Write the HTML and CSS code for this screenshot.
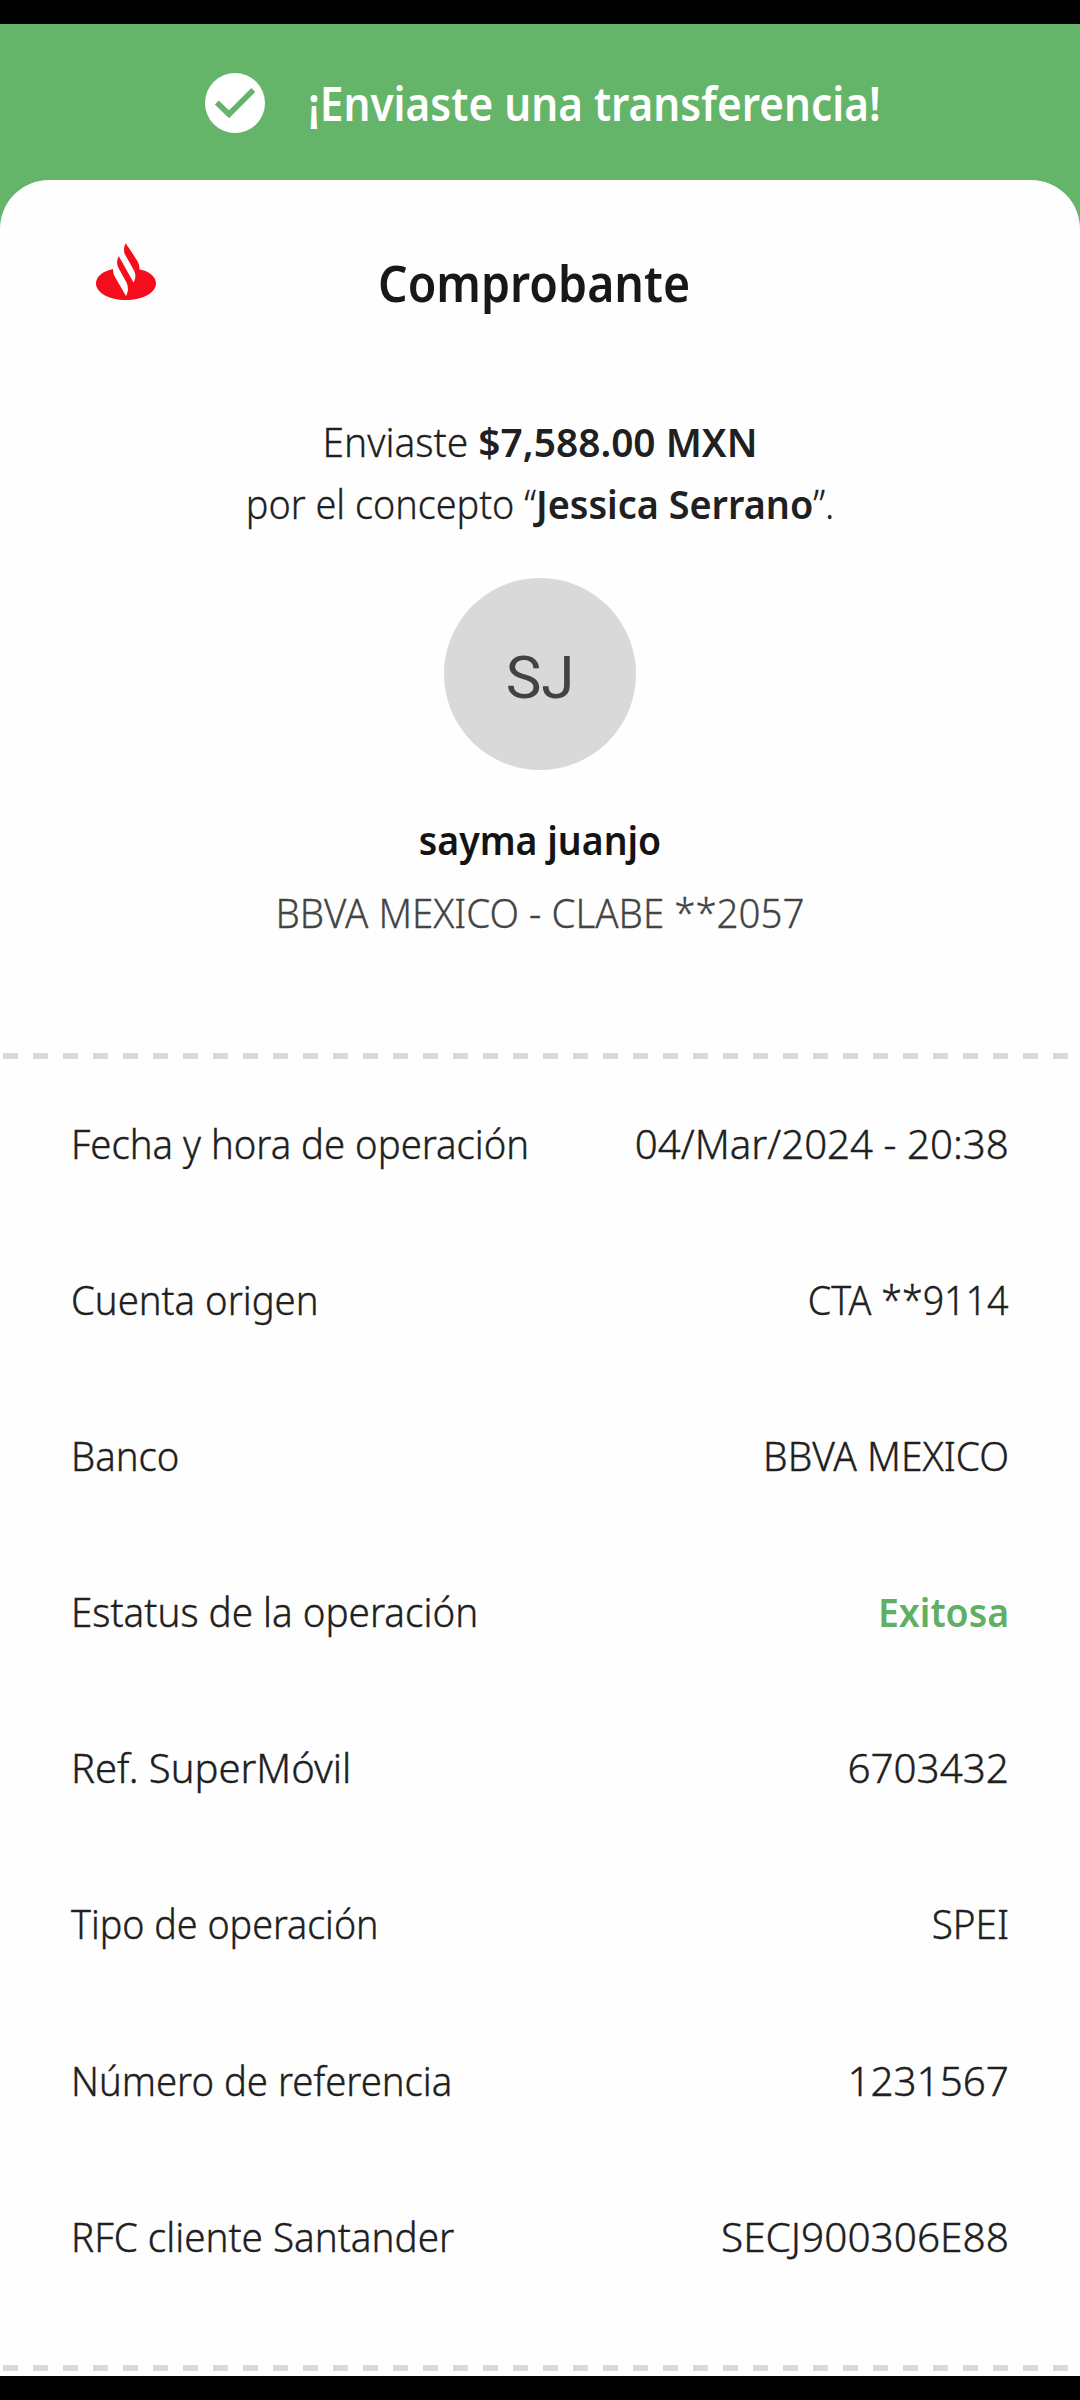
FILE: index.html
```html
<!DOCTYPE html>
<html lang="es">
<head>
<meta charset="utf-8">
<title>Comprobante</title>
<link rel="stylesheet" href="styles.css">
</head>
<body>
<main class="screen">
  <header class="banner">
    <svg class="check" viewBox="0 0 60 60" aria-hidden="true">
      <circle cx="30" cy="30" r="30" fill="#fff"/>
      <path d="M11.800 29.500 24 41.300 48.300 17" fill="none" stroke="#64b46a" stroke-width="5.600"/>
    </svg>
    <p class="banner-text">¡Enviaste una transferencia!</p>
  </header>
  <article class="card">
    <div class="card-head">
      <svg class="logo" viewBox="0 0 60 57" aria-hidden="true">
        <path d="M17 26C7 28 0 33.500 0 40.500 0 49.500 13 57 30 57S60 49.500 60 40.500C60 33.500 53 28 43.500 26.500 43.500 22 42.500 20 41 17.500L33 5C31 3 30.500 1.500 30 0 27.500 4 27.500 8 29 11.500L37.500 26.500C40 31 40 35 37.500 39.500L25.500 18C24 16 23.500 14.500 23 13 20.500 17 20.500 21 22.500 25L30.500 39.500C32.500 44 32.500 48 30 53L19 34C17.500 31.500 17 29 17 26Z" fill="#f60d1c"/>
      </svg>
      <h1 class="title">Comprobante</h1>
    </div>
    <p class="message">
      <span class="line">Enviaste <b>$7,588.00 MXN</b></span>
      <span class="line concept">por el concepto “<b>Jessica Serrano</b>”.</span>
    </p>
    <div class="avatar">SJ</div>
    <p class="name">sayma juanjo</p>
    <p class="account">BBVA MEXICO - CLABE **2057</p>
    <div class="dashes"></div>
    <dl class="details">
      <div class="row date"><dt>Fecha y hora de operación</dt><dd>04/Mar/2024 - 20:38</dd></div>
      <div class="row origin"><dt>Cuenta origen</dt><dd>CTA **9114</dd></div>
      <div class="row bank"><dt>Banco</dt><dd>BBVA MEXICO</dd></div>
      <div class="row status"><dt>Estatus de la operación</dt><dd>Exitosa</dd></div>
      <div class="row ref"><dt>Ref. SuperMóvil</dt><dd>6703432</dd></div>
      <div class="row type"><dt>Tipo de operación</dt><dd>SPEI</dd></div>
      <div class="row number"><dt>Número de referencia</dt><dd>1231567</dd></div>
      <div class="row rfc"><dt>RFC cliente Santander</dt><dd>SECJ900306E88</dd></div>
    </dl>
    <div class="dashes"></div>
  </article>
</main>
</body>
</html>
```
FILE: styles.css
```css
* { box-sizing: border-box; margin: 0; padding: 0; }

body {
  background: #000;
  color: #202020;
  font-family: "Noto Sans", "Open Sans", sans-serif;
  font-size: 40px;
  font-weight: 300;
}

.screen {
  display: flex;
  flex-direction: column;
  width: 1080px;
  height: 2400px;
  border: solid #000;
  border-width: 24px 0;
  background: #64b46a;
  overflow: hidden;
}

.banner {
  display: flex;
  align-items: center;
  gap: 43px;
  height: 156px;
  padding: 2px 0 0 205px;
  color: #fff;
}
.check { width: 60px; height: 60px; }
.banner-text {
  font-size: 46px;
  font-weight: 600;
  white-space: nowrap;
  transform: scaleX(.92);
  transform-origin: left;
}

.card {
  flex: 1;
  display: flex;
  flex-direction: column;
  background: #fefefe;
  border-radius: 49px 49px 0 0;
}

.card-head { display: flex; align-items: flex-start; height: 133px; padding-left: 96px; }
.logo { width: 60px; height: 57px; margin-top: 63px; }
.title {
  margin: 73px 0 0 222px;
  color: #181818;
  font-size: 50px;
  font-weight: 600;
  line-height: 60px;
  transform: scaleX(.93);
  transform-origin: left;
}

.message { margin-top: 98px; line-height: 61.5px; text-align: center; -webkit-text-stroke: .3px; }
.message b { font-weight: 600; -webkit-text-stroke: 0; }
.line { display: block; transform: scaleX(.972); }
.concept { transform: scaleX(.945); }

.avatar {
  display: flex;
  align-items: center;
  justify-content: center;
  align-self: center;
  width: 192px;
  height: 192px;
  margin-top: 44px;
  padding-top: 6px;
  border-radius: 50%;
  background: #d9d9d9;
  color: #424242;
  font: 400 60px Roboto, sans-serif;
}

.name {
  margin-top: 40px;
  color: #141414;
  font-weight: 600;
  line-height: 60px;
  text-align: center;
  transform: scaleX(.936);
}
.account {
  margin-top: 13px;
  color: #444;
  line-height: 60px;
  text-align: center;
  transform: scaleX(.962);
  -webkit-text-stroke: .3px;
}

.dashes {
  height: 6px;
  background: repeating-linear-gradient(90deg, #dadada 0 15px, transparent 15px 30px) 3px 0 / 1080px 6px no-repeat;
}
.account + .dashes { margin-top: 110px; }

.details { padding: 7px 71px 0; }
.details + .dashes { margin-top: 50px; }
.row {
  display: flex;
  justify-content: space-between;
  height: 156.1px;
  line-height: 156px;
  white-space: nowrap;
  -webkit-text-stroke: .4px;
}
.row dt { transform: scaleX(.957); transform-origin: left; }
.row dd { transform-origin: right; }

/* Width adjustments for individual texts */
.status dt, .rfc dt { transform: scaleX(.965); }
.ref dt { transform: none; }
.type dt { transform: scaleX(.941); }
.date dd { transform: scaleX(1.006); }
.origin dd { transform: scaleX(.94); }
.bank dd { transform: scaleX(.972); }
.status dd { color: #5faf64; font-weight: 600; transform: scaleX(.936); -webkit-text-stroke: 0; }
.ref dd, .number dd { transform: scaleX(1.01); }
.type dd { transform: scaleX(.967); }
.rfc dd { transform: scaleX(1.014); }
```
